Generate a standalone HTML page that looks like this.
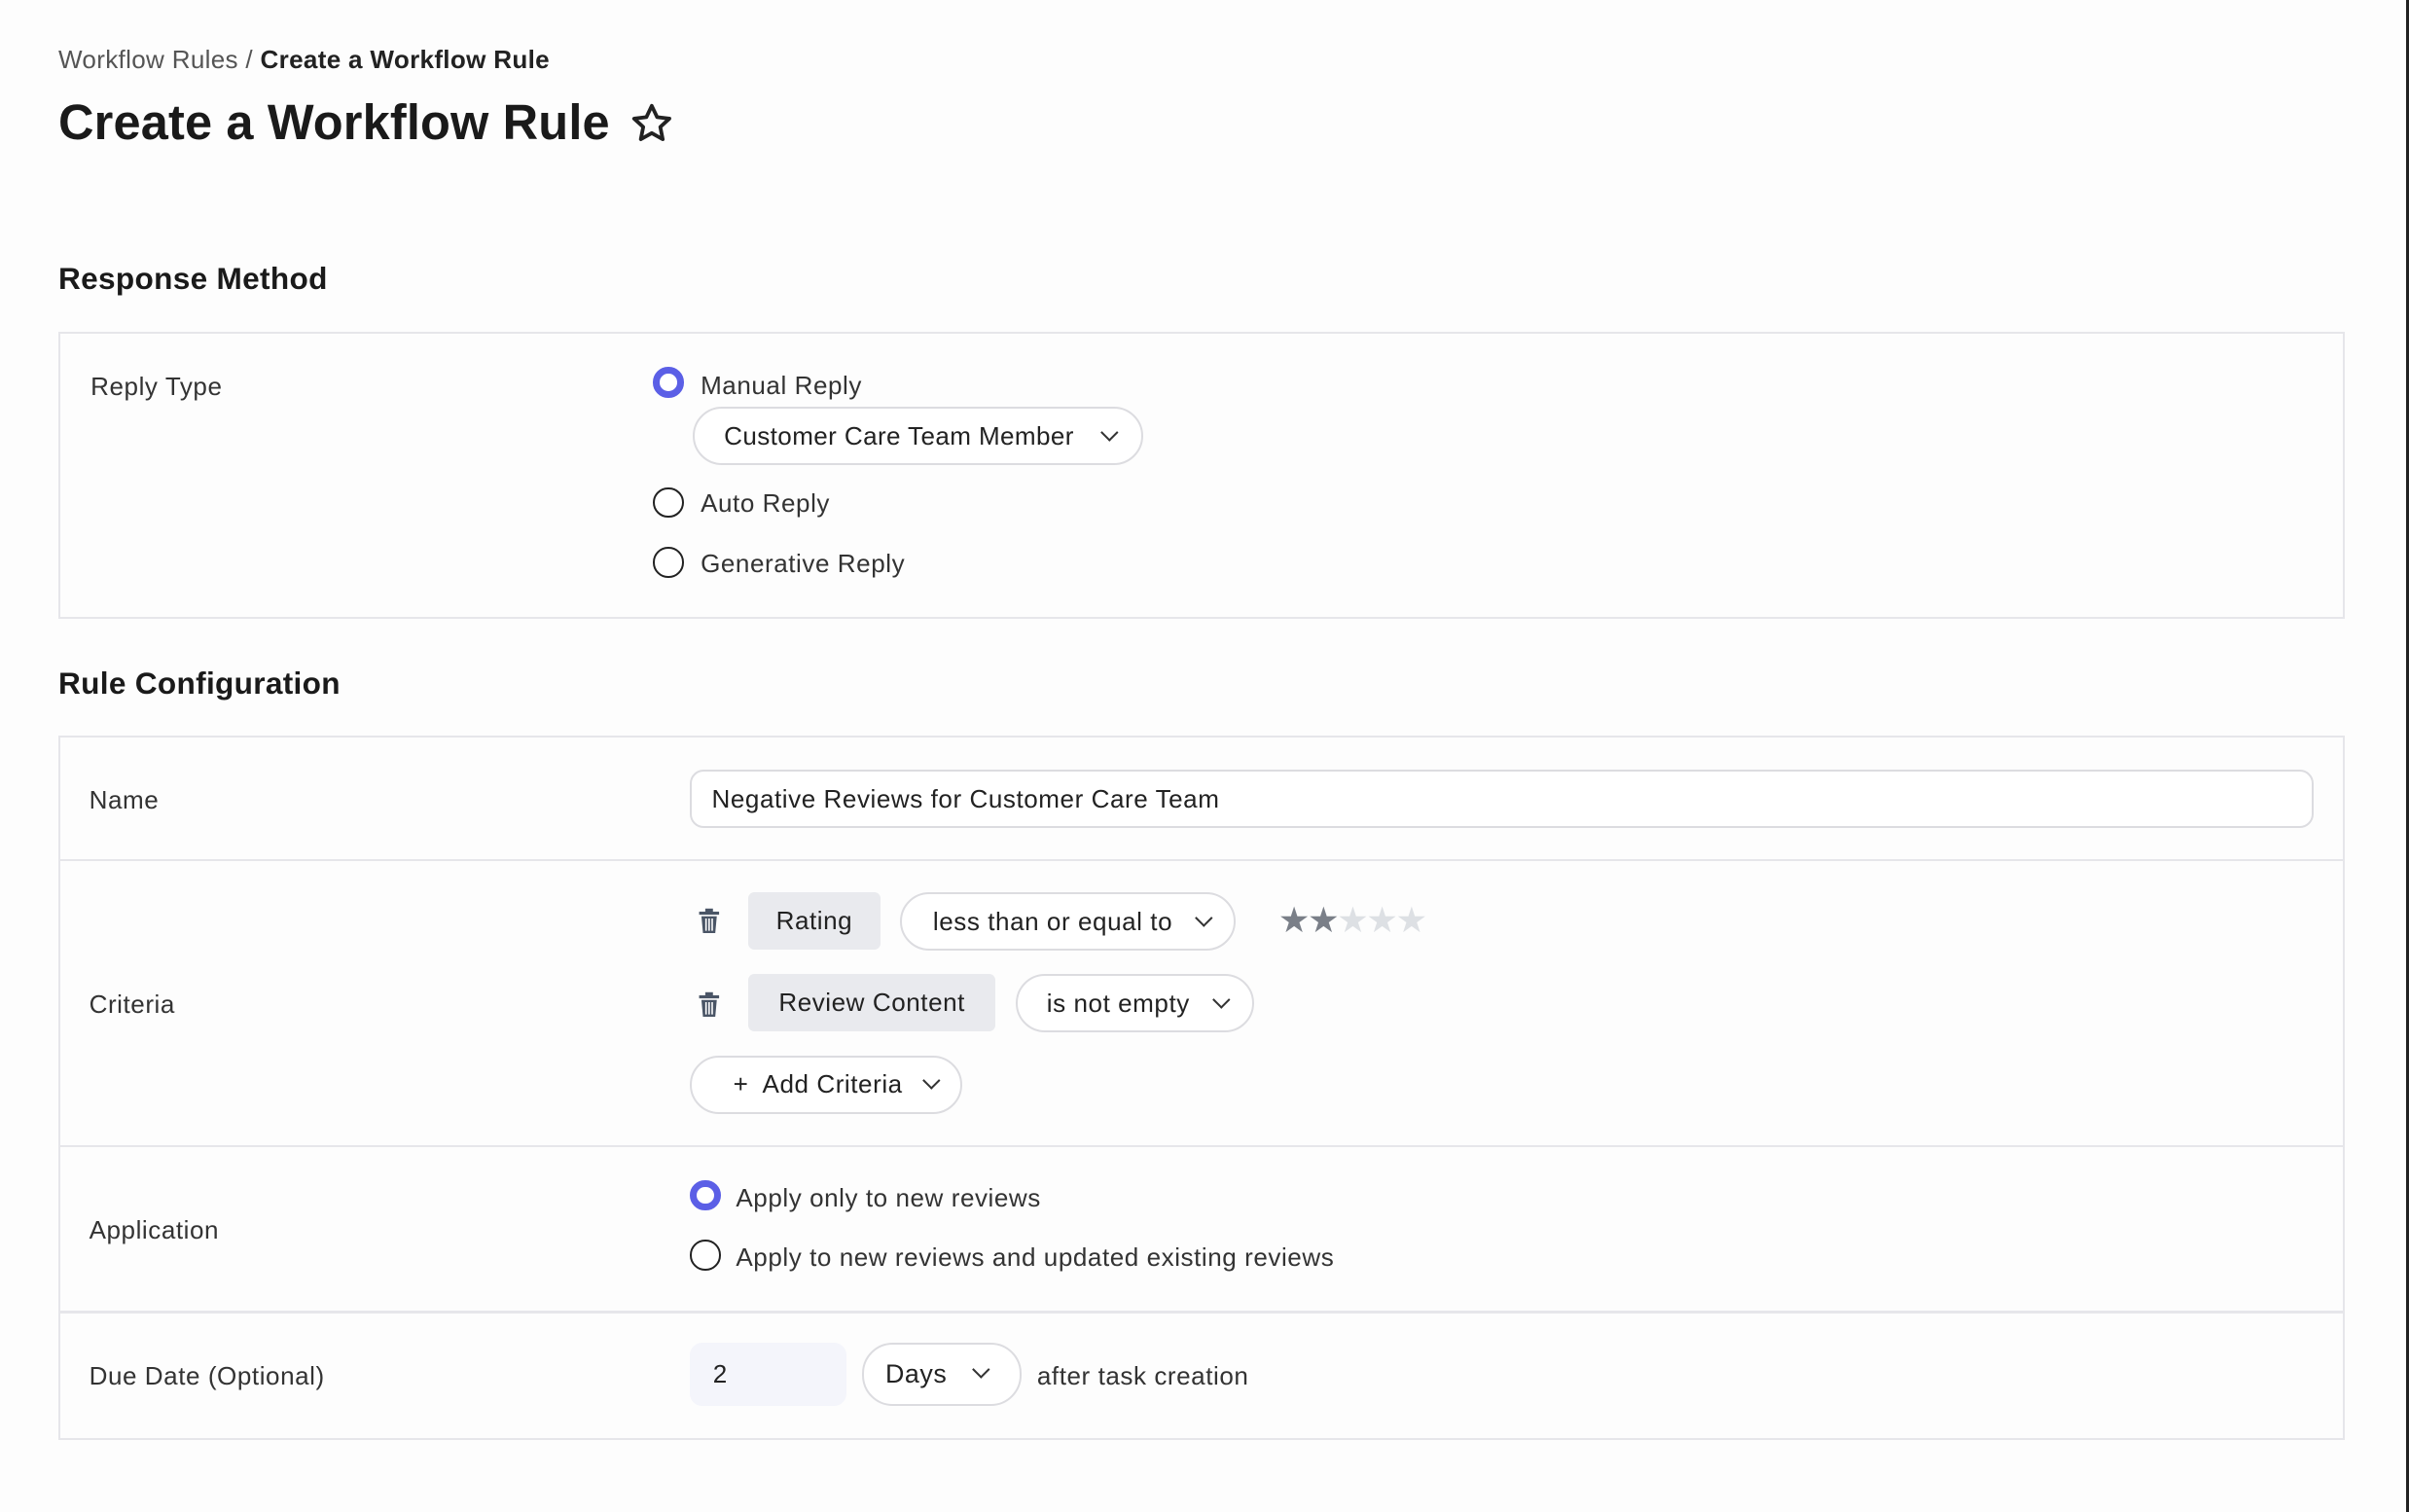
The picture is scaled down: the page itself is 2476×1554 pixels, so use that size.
<!DOCTYPE html>
<html><head><meta charset="utf-8"><style>
*{box-sizing:border-box;margin:0;padding:0}
html,body{width:2476px;height:1554px;overflow:hidden;background:#fdfdfd}
#w{zoom:1.5791;position:relative;width:1568px;height:984px;font-family:"Liberation Sans",sans-serif;color:#222;}
.a{position:absolute;white-space:nowrap}
.t{font-size:16.5px;color:#333;letter-spacing:0.35px}
.box{position:absolute;left:38px;width:1488px;border:1.5px solid #e6e6ea;background:#fdfdfd}
.pill{position:absolute;border:1.5px solid #dcdce0;border-radius:20px;background:#fff;font-size:16.5px;color:#222;display:flex;align-items:center;letter-spacing:0.35px}
.chev{position:absolute;width:8px;height:8px;border-right:1.5px solid #333;border-bottom:1.5px solid #333;transform:rotate(45deg)}
.rad{position:absolute;width:20px;height:20px;border-radius:50%;border:1.5px solid #222;background:#fff}
.rad.on{border:5px solid #5b5fe6}
.chip{position:absolute;background:#e9eaee;border-radius:4px;font-size:16.5px;display:flex;align-items:center;justify-content:center;color:#222;letter-spacing:0.35px}
.hl{position:absolute;left:0;right:0;height:1.5px;background:#e6e6ea}
</style></head><body><div id="w">
<div class="a" style="left:38px;top:29px;font-size:16.5px;color:#555;letter-spacing:0.2px">Workflow Rules / <b style="color:#222">Create a Workflow Rule</b></div>
<div class="a" style="left:38px;top:61px;font-size:32px;font-weight:bold;color:#1a1a1a;letter-spacing:0.1px">Create a Workflow Rule</div>
<svg class="a" style="left:410px;top:66px" width="29" height="29" viewBox="0 0 24 24"><path d="M12 2.5l2.9 6.1 6.6.8-4.9 4.5 1.3 6.6L12 17.2l-5.9 3.3 1.3-6.6-4.9-4.5 6.6-.8z" fill="none" stroke="#222" stroke-width="2" stroke-linejoin="round"/></svg>
<div class="a" style="left:38px;top:170px;font-size:20px;font-weight:bold;color:#1a1a1a;letter-spacing:0.2px">Response Method</div>
<div class="box" style="top:216px;height:187px"></div>
<div class="a t" style="left:59px;top:242px">Reply Type</div>
<div class="rad on" style="left:425px;top:239px"></div><div class="a t" style="left:456px;top:241px">Manual Reply</div>
<div class="pill" style="left:451px;top:265px;width:293px;height:38px;padding-left:19px;letter-spacing:0.25px">Customer Care Team Member<span class="chev" style="left:266px;top:11px"></span></div>
<div class="rad" style="left:425px;top:317px"></div><div class="a t" style="left:456px;top:318px">Auto Reply</div>
<div class="rad" style="left:425px;top:356px"></div><div class="a t" style="left:456px;top:357px">Generative Reply</div>
<div class="a" style="left:38px;top:433px;font-size:20px;font-weight:bold;color:#1a1a1a;letter-spacing:0.2px">Rule Configuration</div>
<div class="box" style="top:479px;height:458px">
<div class="hl" style="top:79px"></div><div class="hl" style="top:265px"></div><div class="hl" style="top:373px"></div>
</div>
<div class="a t" style="left:58px;top:511px">Name</div>
<div class="pill" style="left:449px;top:501px;width:1057px;height:38px;border-radius:9px;padding-left:13px">Negative Reviews for Customer Care Team</div>
<div class="a t" style="left:58px;top:644px">Criteria</div>
<svg class="a" style="left:454px;top:591px" width="15" height="17" viewBox="0 0 15 17"><rect x="1" y="2.5" width="13" height="2" fill="#4a5566"/><rect x="5" y="0.5" width="5" height="2.5" fill="#4a5566"/><path d="M2.5 5.5h10l-1 11h-8z" fill="#4a5566"/><path d="M5.5 7v8M7.5 7v8M9.5 7v8" stroke="#fff" stroke-width="1"/></svg>
<div class="chip" style="left:487px;top:581px;width:86px;height:37px">Rating</div>
<div class="pill" style="left:586px;top:581px;width:218px;height:38px;padding-left:20px">less than or equal to<span class="chev" style="left:192px;top:11px"></span></div>
<div class="a" style="left:832px;top:585px;font-size:23px;letter-spacing:-1.5px"><span style="color:#7a7f88">★★</span><span style="color:#dde0e4">★★★</span></div>
<svg class="a" style="left:454px;top:645px" width="15" height="17" viewBox="0 0 15 17"><rect x="1" y="2.5" width="13" height="2" fill="#4a5566"/><rect x="5" y="0.5" width="5" height="2.5" fill="#4a5566"/><path d="M2.5 5.5h10l-1 11h-8z" fill="#4a5566"/><path d="M5.5 7v8M7.5 7v8M9.5 7v8" stroke="#fff" stroke-width="1"/></svg>
<div class="chip" style="left:487px;top:634px;width:161px;height:37px">Review Content</div>
<div class="pill" style="left:661px;top:634px;width:155px;height:38px;padding-left:19px">is not empty<span class="chev" style="left:129px;top:11px"></span></div>
<div class="pill" style="left:449px;top:687px;width:177px;height:38px;padding-left:27px">+&nbsp; Add Criteria<span class="chev" style="left:152px;top:11px"></span></div>
<div class="a t" style="left:58px;top:791px">Application</div>
<div class="rad on" style="left:449px;top:768px"></div><div class="a t" style="left:479px;top:770px">Apply only to new reviews</div>
<div class="rad" style="left:449px;top:807px"></div><div class="a t" style="left:479px;top:809px">Apply to new reviews and updated existing reviews</div>
<div class="a t" style="left:58px;top:886px">Due Date (Optional)</div>
<div class="a" style="left:449px;top:874px;width:102px;height:41px;background:#f4f5fb;border-radius:8px;font-size:16.5px;padding:11px 0 0 15px">2</div>
<div class="pill" style="left:561px;top:874px;width:104px;height:41px;padding-left:14px;font-size:17px">Days<span class="chev" style="left:72px;top:12px"></span></div>
<div class="a t" style="left:675px;top:886px">after task creation</div>
<div class="a" style="left:1566px;top:0;width:2px;height:984px;background:#222"></div>
</div></body></html>
